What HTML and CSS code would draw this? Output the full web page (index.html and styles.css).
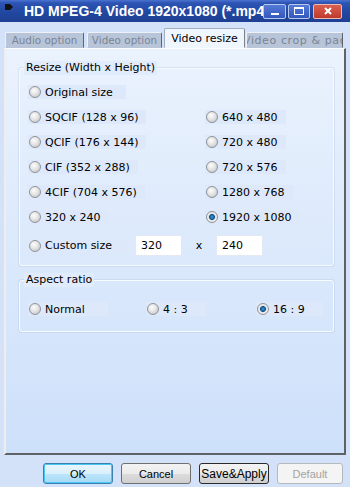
FILE: index.html
```html
<!DOCTYPE html>
<html lang="en">
<head>
    <meta charset="UTF-8">
    <meta name="viewport" content="width=device-width, initial-scale=1.0">
    <title>HD MPEG-4 Video 1920x1080</title>
    <link rel="stylesheet" href="styles.css">
</head>
<body>
    <div class="window">
        <div class="titlebar">
            <svg class="app-icon" width="8" height="6" viewBox="0 0 8 6">
                <path d="M0 0h5l3 3-3 3H0z" fill="#111"/>
            </svg>
            <span class="title">HD MPEG-4 Video 1920x1080 (*.mp4)</span>
            <div class="controls">
                <div class="ctl ctl-min">
                    <svg width="10" height="10" viewBox="0 0 10 10"><rect x="1" y="7" width="8" height="2" fill="#fff"/></svg>
                </div>
                <div class="ctl ctl-max">
                    <svg width="12" height="10" viewBox="0 0 12 10"><rect x="1.5" y="1.5" width="9" height="7" fill="none" stroke="#fff"/><rect x="1" y="1" width="10" height="2" fill="#fff"/></svg>
                </div>
                <div class="ctl ctl-close">
                    <svg width="10" height="10" viewBox="0 0 10 10"><path d="M2 2l6 6M8 2l-6 6" stroke="#fff" stroke-width="2"/></svg>
                </div>
            </div>
        </div>

        <div class="tabs">
            <div class="tab tab-audio">Audio option</div>
            <div class="tab tab-video">Video option</div>
            <div class="tab tab-resize active">Video resize</div>
            <div class="tab tab-crop"><span>Video crop &amp; padding</span></div>
        </div>

        <div class="panel">
            <fieldset class="group group-resize">
                <legend>Resize (Width x Height)</legend>
                <div class="sizes">
                    <label class="opt left opt-wide"><span class="radio"></span>Original size</label>
                    <label class="opt left"><span class="radio"></span>SQCIF (128 x 96)</label>
                    <label class="opt right"><span class="radio"></span>640 x 480</label>
                    <label class="opt left"><span class="radio"></span>QCIF (176 x 144)</label>
                    <label class="opt right"><span class="radio"></span>720 x 480</label>
                    <label class="opt left"><span class="radio"></span>CIF (352 x 288)</label>
                    <label class="opt right"><span class="radio"></span>720 x 576</label>
                    <label class="opt left"><span class="radio"></span>4CIF (704 x 576)</label>
                    <label class="opt right"><span class="radio"></span>1280 x 768</label>
                    <label class="opt left"><span class="radio"></span>320 x 240</label>
                    <label class="opt right"><span class="radio on"></span>1920 x 1080</label>
                </div>
                <div class="custom">
                    <label class="opt opt-custom"><span class="radio"></span>Custom size</label>
                    <input class="num" type="text" value="320">
                    <span class="times">x</span>
                    <input class="num" type="text" value="240">
                </div>
            </fieldset>

            <fieldset class="group group-aspect">
                <legend>Aspect ratio</legend>
                <div class="ratios">
                    <label class="opt opt-normal"><span class="radio"></span>Normal</label>
                    <label class="opt opt-ratio"><span class="radio"></span>4 : 3</label>
                    <label class="opt opt-ratio"><span class="radio on"></span>16 : 9</label>
                </div>
            </fieldset>
        </div>

        <div class="actions">
            <button class="btn btn-ok">OK</button>
            <button class="btn">Cancel</button>
            <button class="btn btn-save">Save&amp;Apply</button>
            <button class="btn btn-default" disabled>Default</button>
        </div>
    </div>
</body>
</html>
```

FILE: styles.css
```css
* {
    box-sizing: border-box;
}
body {
    margin: 0;
    width: 350px;
    height: 487px;
    overflow: hidden;
    font-family: "DejaVu Sans", Verdana, sans-serif;
    font-size: 11px;
    color: #000;
    background: #d3e2f8;
}
.window {
    height: 487px;
    display: flex;
    flex-direction: column;
}

/* title bar */
.titlebar {
    height: 22px;
    display: flex;
    align-items: center;
    padding-left: 5px;
    background: linear-gradient(#4a72d0 0, #2d54b4 3px, #21469f 60%, #1e3f92 100%);
}
.app-icon {
    flex: none;
    align-self: flex-start;
    margin-top: 4px;
}
.title {
    flex: 1;
    min-width: 0;
    overflow: hidden;
    white-space: nowrap;
    margin-left: 11px;
    color: #fff;
    font: bold 14px "Liberation Sans", Arial, sans-serif;
}
.controls {
    display: flex;
    gap: 2px;
    margin-right: 8px;
}
.ctl {
    height: 15px;
    width: 23px;
    display: flex;
    align-items: center;
    justify-content: center;
    border: 1px solid #b6c8ee;
    border-radius: 2px;
    background: linear-gradient(#5479d6, #3458bd);
}
.ctl-max {
    width: 22px;
}
.ctl-close {
    width: 29px;
    margin-left: 1px;
    border-color: #efb8b0;
    background: linear-gradient(#d9604f, #bf3a2c);
}

/* tabs */
.tabs {
    height: 26px;
    display: flex;
    align-items: flex-end;
    padding-left: 5px;
    gap: 2px;
}
.tab {
    height: 16px;
    display: flex;
    align-items: center;
    justify-content: center;
    overflow: hidden;
    white-space: nowrap;
    font-size: 10.4px;
    color: #7a8496;
    background: #b8c4d8;
    border: 1px solid;
    border-color: #eef2f8 #5f636a #b8c4d8 #eef2f8;
    border-radius: 2px 2px 0 0;
}
.tab-audio {
    width: 79px;
    margin-right: 1px;
}
.tab-video {
    width: 75px;
}
.tab-resize {
    width: 81px;
}
.tab-crop {
    width: 97px;
    margin-left: -1px;
    justify-content: flex-start;
}
.tab-crop span {
    margin-left: -4px;
    font-size: 11px;
    letter-spacing: 0.6px;
}
.tab.active {
    height: 20px;
    font-size: 11px;
    color: #000;
    background: #f0f6fe;
    border-color: #a2adbd #7c838d #f0f6fe #a2adbd;
}

/* panel */
.panel {
    height: 407px;
    margin: 0 4px;
    padding: 12px 10px 0 13px;
    border-style: solid;
    border-width: 1px 2px 2px 2px;
    border-color: #fbfdff #5f6266 #5f6266 #eeeeee;
    background: linear-gradient(#eaf2fd, #cde0fa);
}
.group {
    margin: 0;
    padding: 0;
    min-width: 0;
    border: 1px solid #f7faff;
    border-radius: 3px;
    box-shadow: 0 0 0 1px rgba(160, 180, 210, 0.25);
}
.group legend {
    margin-left: 4px;
    padding: 0 2px;
    line-height: 14px;
    background: #e0ebfc;
}
.group-resize {
    padding-bottom: 9px;
}
.group-aspect {
    margin-top: 7px;
    padding-bottom: 15px;
}

/* radio options */
.opt {
    height: 14px;
    display: flex;
    align-items: center;
    gap: 4px;
    padding: 0 8px 0 1px;
    justify-self: start;
    white-space: nowrap;
    background: #dde9fb;
}
.opt-wide {
    width: 98px;
}
.radio {
    width: 12px;
    height: 12px;
    flex: none;
    border: 1px solid #8f949a;
    border-radius: 50%;
    background: radial-gradient(circle at 40% 35%, #fdfdfd 0, #e4e4e4 45%, #b9bcc0 100%);
}
.radio.on {
    background: radial-gradient(circle at 50% 50%, #3b9ad8 0, #10548f 2.6px, #dcdcdc 3.3px, #f2f2f2 60%, #c4c7cb 100%);
}
.sizes {
    display: grid;
    grid-template-columns: 177px auto;
    grid-auto-rows: 14px;
    row-gap: 11px;
    margin-top: 10px;
    padding-left: 8px;
}
.sizes .left {
    grid-column: 1;
}
.sizes .right {
    grid-column: 2;
}
.custom {
    display: flex;
    align-items: center;
    margin-top: 11px;
    padding-left: 8px;
}
.opt-custom {
    width: 107px;
}
.num {
    width: 47px;
    height: 21px;
    padding: 0 5px;
    border: 1px solid #e3e9f2;
    background: #fff;
    font: inherit;
    color: #000;
}
.times {
    width: 34px;
    text-align: center;
}
.ratios {
    display: grid;
    grid-template-columns: 118px 110px auto;
    margin-top: 15px;
    padding-left: 8px;
}
.opt-normal {
    width: 80px;
}
.opt-ratio {
    padding-right: 18px;
}

/* buttons */
.actions {
    display: flex;
    justify-content: flex-end;
    gap: 8px;
    padding: 8px 7px 0 0;
}
.btn {
    width: 70px;
    height: 21px;
    padding: 0;
    font: 11px "Liberation Sans", Arial, sans-serif;
    color: #000;
    border: 1px solid #707070;
    border-radius: 3px;
    background: linear-gradient(#f3f3f3 0, #ebebeb 50%, #dddddd 50%, #cfcfcf 100%);
}
.btn-ok {
    border-color: #3c7fb1;
    box-shadow: inset 0 0 0 1px #48c8f4;
    background: linear-gradient(#eaf6fd 0, #d9f0fc 50%, #bee6fd 50%, #a7d9f5 100%);
}
.btn-save {
    font-size: 12px;
    border-color: #2b2b2b;
}
.btn-default {
    width: 66px;
    color: #a3a3a3;
    border-color: #b5b9bd;
    background: #f4f4f4;
}
```
